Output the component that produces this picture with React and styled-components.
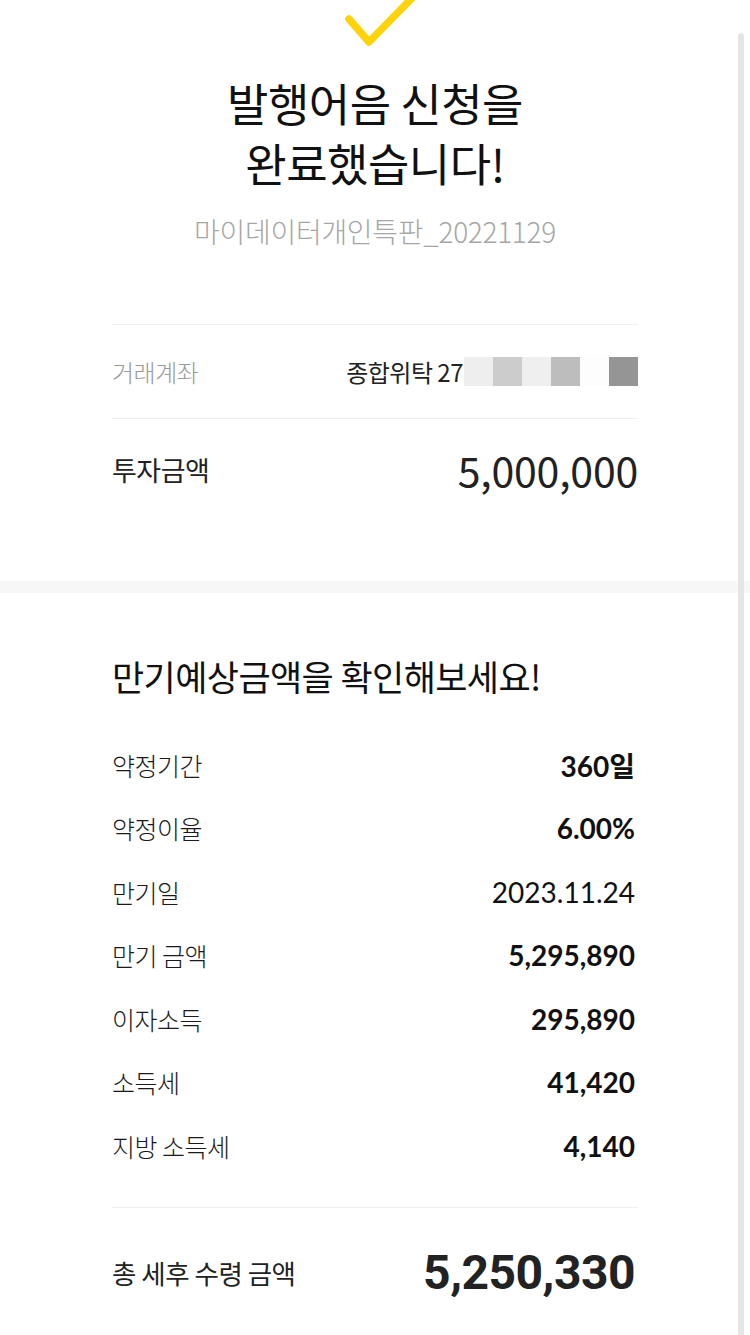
import React from "react";
import styled, { createGlobalStyle } from "styled-components";

const Global = createGlobalStyle`
  html, body { margin: 0; padding: 0; background: #ffffff; }
  body { font-family: "Noto Sans CJK KR", "Noto Sans", sans-serif; color: #222; }
  * { box-sizing: border-box; }
`;

const Page = styled.div`
  position: relative;
  width: 750px;
  height: 1335px;
  overflow: hidden;
  background: #fff;
`;

const ScrollThumb = styled.div`
  position: absolute;
  top: 33px;
  left: 738px;
  width: 6px;
  height: 1320px;
  border-radius: 3px 3px 0 0;
  background: #e5e5e5;
`;

const Header = styled.section`
  display: flex;
  flex-direction: column;
  align-items: center;
`;

const CheckIcon = styled.svg`
  display: block;
  width: 80px;
  height: 50px;
  margin-left: 10px;
`;

const Title = styled.h1`
  margin: 23px 0 0;
  font-size: 45px;
  line-height: 60px;
  font-weight: 400;
  color: #111;
  text-align: center;
  letter-spacing: -0.5px;
`;

const Sub = styled.p`
  margin: 20px 0 0;
  font-size: 28px;
  line-height: 36px;
  font-weight: 300;
  color: #a6a6a6;
  letter-spacing: -0.3px;
`;

const InfoList = styled.div`
  margin: 75px 112px 0;
  border-top: 1px solid #efefef;
  padding-bottom: 62px;
`;

const InfoRow = styled.div`
  display: flex;
  align-items: center;
  justify-content: space-between;
  height: ${(p) => p.$h}px;
  border-bottom: ${(p) => (p.$line ? "1px solid #efefef" : "none")};
`;

const InfoLabel = styled.span`
  font-size: ${(p) => p.$size}px;
  font-weight: ${(p) => p.$weight};
  color: ${(p) => p.$color};
  letter-spacing: -0.5px;
`;

const AccountValue = styled.div`
  display: flex;
  align-items: center;
`;

const AccountText = styled.span`
  font-size: 24px;
  font-weight: 400;
  color: #222;
  letter-spacing: -0.5px;
`;

const Masks = styled.div`
  display: flex;
  margin-left: 1px;
`;

const Mask = styled.span`
  width: 29px;
  height: 29px;
  background: ${(p) => p.$c};
`;

const BigAmount = styled.span`
  font-family: "Noto Sans CJK KR", "Noto Sans", sans-serif;
  font-size: 41px;
  font-weight: 400;
  color: #222;
  letter-spacing: -0.2px;
`;

const Band = styled.div`
  height: 12px;
  background: #f7f7f7;
`;

const Section = styled.section`
  padding: 61px 112px 0;
`;

const SectionTitle = styled.h2`
  margin: 0;
  font-size: 35px;
  line-height: 44px;
  font-weight: 400;
  color: #111;
  letter-spacing: -0.6px;
`;

const DetailList = styled.div`
  margin-top: 35px;
  padding-bottom: 29px;
  border-bottom: 1px solid #efefef;
`;

const DetailRow = styled.div`
  display: flex;
  align-items: center;
  justify-content: space-between;
  height: 63.5px;
  padding-right: 3px;
`;

const DetailLabel = styled.span`
  font-size: 25px;
  font-weight: 300;
  color: #1a1a1a;
  letter-spacing: -0.5px;
`;

const DetailValue = styled.span`
  font-family: Lato, "Noto Sans CJK KR", sans-serif;
  font-size: 28px;
  font-weight: ${(p) => (p.$bold ? 700 : 400)};
  color: #111;
`;

const TotalRow = styled.div`
  display: flex;
  align-items: center;
  justify-content: space-between;
  height: 130px;
  padding-right: 3px;
`;

const TotalLabel = styled.span`
  font-size: 26.5px;
  font-weight: 400;
  color: #222;
  letter-spacing: -0.5px;
`;

const TotalValue = styled.span`
  font-family: Roboto, sans-serif;
  font-size: 48px;
  font-weight: 700;
  color: #222;
  letter-spacing: -0.5px;
`;

const details = [
  { label: "약정기간", value: "360일", bold: true },
  { label: "약정이율", value: "6.00%", bold: true },
  { label: "만기일", value: "2023.11.24", bold: false },
  { label: "만기 금액", value: "5,295,890", bold: true },
  { label: "이자소득", value: "295,890", bold: true },
  { label: "소득세", value: "41,420", bold: true },
  { label: "지방 소득세", value: "4,140", bold: true },
];

const maskColors = ["#eeeeee", "#cccccc", "#efefef", "#bdbdbd", "#fdfdfd", "#959595"];

export default function App() {
  return (
    <Page>
      <Global />
      <Header>
        <CheckIcon viewBox="0 0 80 50">
          <path
            d="M9 19 L29 42 L74 -4"
            fill="none"
            stroke="#FFD30A"
            strokeWidth="7.5"
            strokeLinecap="round"
            strokeLinejoin="round"
          />
        </CheckIcon>
        <Title>
          발행어음 신청을
          <br />
          완료했습니다!
        </Title>
        <Sub>마이데이터개인특판_20221129</Sub>
      </Header>

      <InfoList>
        <InfoRow $h={94} $line>
          <InfoLabel $size={24} $weight={300} $color="#9a9a9a">거래계좌</InfoLabel>
          <AccountValue>
            <AccountText>종합위탁 27</AccountText>
            <Masks>
              {maskColors.map((c, i) => (
                <Mask key={i} $c={c} />
              ))}
            </Masks>
          </AccountValue>
        </InfoRow>
        <InfoRow $h={100}>
          <InfoLabel $size={27} $weight={400} $color="#222">투자금액</InfoLabel>
          <BigAmount>5,000,000</BigAmount>
        </InfoRow>
      </InfoList>

      <Band />

      <Section>
        <SectionTitle>만기예상금액을 확인해보세요!</SectionTitle>
        <DetailList>
          {details.map((d) => (
            <DetailRow key={d.label}>
              <DetailLabel>{d.label}</DetailLabel>
              <DetailValue $bold={d.bold}>{d.value}</DetailValue>
            </DetailRow>
          ))}
        </DetailList>
        <TotalRow>
          <TotalLabel>총 세후 수령 금액</TotalLabel>
          <TotalValue>5,250,330</TotalValue>
        </TotalRow>
      </Section>
      <ScrollThumb />
    </Page>
  );
}
